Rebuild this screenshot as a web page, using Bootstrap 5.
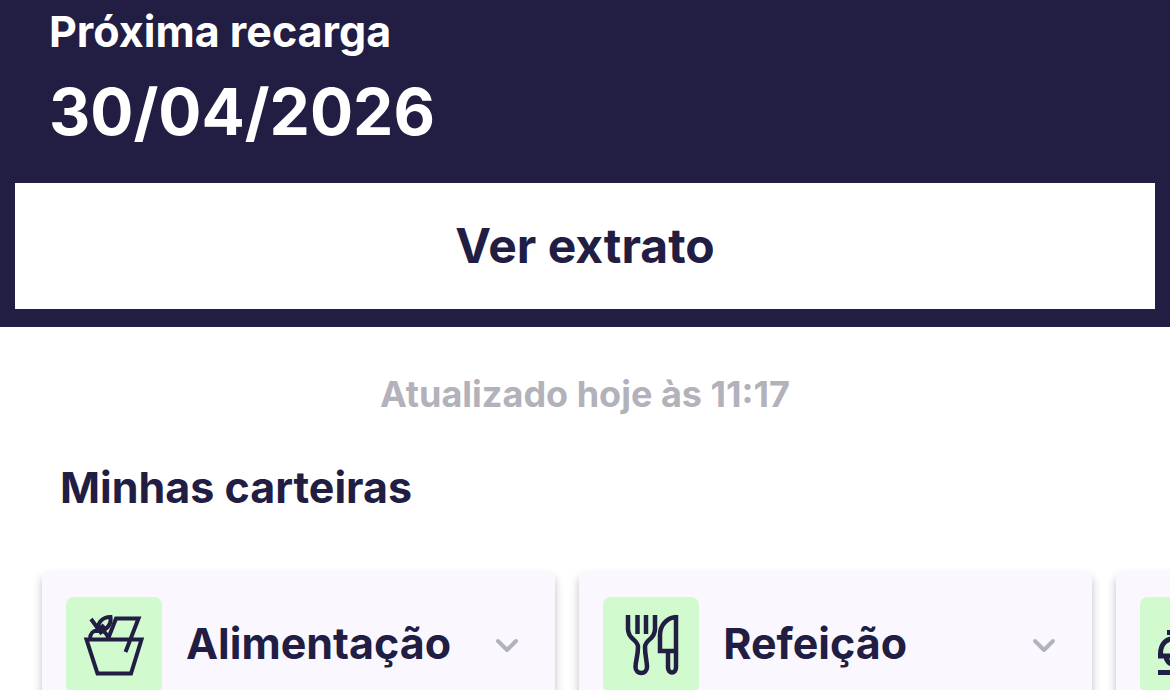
<!DOCTYPE html>
<html lang="pt-BR">
<head>
<meta charset="utf-8">
<meta name="viewport" content="width=device-width, initial-scale=1">
<title>Carteiras</title>
<link rel="stylesheet" href="https://cdn.jsdelivr.net/npm/bootstrap@5.3.0/dist/css/bootstrap.min.css">
<style>
:root { --ink: #211d43; --muted: #b3b1ba; --mint: #d1facf; --lilac: #faf8fe; }
body { font-family: Inter, "Liberation Sans", sans-serif; font-weight: 700; color: var(--ink); }
.balance { background: var(--ink); padding: 5px 15px 18px; }
.balance-info { padding: 0 34px; }
.label-text { font-size: 43px; line-height: 52px; }
.date-text { font-size: 64px; line-height: 80px; margin-top: 15px; }
.btn-statement { font-size: 48px; line-height: 66px; padding: 30px; margin-top: 31px; border: 0; border-radius: 0; background: #fff; color: var(--ink); font-weight: 700; }
.btn-statement:hover { background: #f1eff8; color: var(--ink); }
.updated { font-size: 36px; line-height: 44px; color: var(--muted); margin-top: 45px; font-weight: 700; }
.section-title { font-size: 43px; line-height: 52px; margin: 45px 0 0; padding: 0 60px; font-weight: 700; }
.wallets { gap: 24px; padding: 58px 0 32px 42px; }
.wallet { flex: 0 0 45.5%; gap: 24px; padding: 26px 32px 26px 24px; border: 0; border-radius: 6px; background: var(--lilac); color: var(--ink); box-shadow: 0 6px 10px rgba(0,0,0,.25); font-size: 43px; line-height: 52px; font-weight: 700; }
.wallet-name { padding-bottom: 4px; }
.wallet-icon { width: 96px; height: 96px; border-radius: 8px; background: var(--mint); }
.chevron { width: 32px; height: 32px; }
</style>
</head>
<body class="vh-100 overflow-hidden bg-white">
<header class="balance text-white">
  <div class="balance-info">
    <div class="label-text">Próxima recarga</div>
    <div class="date-text">30/04/2026</div>
  </div>
  <button type="button" class="btn btn-statement w-100">Ver extrato</button>
</header>
<main>
  <p class="updated text-center mb-0">Atualizado hoje às 11:17</p>
  <h2 class="section-title">Minhas carteiras</h2>
  <div class="wallets d-flex overflow-hidden">
    <button type="button" class="wallet d-flex align-items-center text-start">
      <svg class="wallet-icon flex-shrink-0" viewBox="0 0 96 96" fill="none" stroke="#211d43" stroke-width="4" aria-hidden="true">
        <path d="M20.500 42.500H75.500L65 76.500H31.500ZM42 42L50 21.500H72.500L59.500 55M24 42C24 31 38 30 42 40M25 22L36 37"/>
        <path d="M32 34C31 26 36 20 44.500 20C45.500 27 41 34 32 34L38 28" stroke-width="4"/>
      </svg>
      <span class="wallet-name flex-grow-1">Alimentação</span>
      <svg class="chevron flex-shrink-0" viewBox="0 0 32 32" fill="none" stroke="#b3b1ba" stroke-width="4" stroke-linecap="round" stroke-linejoin="round" aria-hidden="true"><path d="M7 12L16 21L25 12"/></svg>
    </button>
    <button type="button" class="wallet d-flex align-items-center text-start">
      <svg class="wallet-icon flex-shrink-0" viewBox="0 0 96 96" fill="none" stroke="#211d43" stroke-width="4.500" aria-hidden="true">
        <path d="M25 18V32C25 43 35 42 35 50C35 59 32.500 64 32.500 70C32.500 78 44 78 44 70C44 64 42 59 42 50C42 42 52 43 52 32V18M34.500 18V37M43 18V37M73 18V70.500C73 77 65 77 65 70.500V54M73 20C63 21 57 29 57 38V54H73"/>
      </svg>
      <span class="wallet-name flex-grow-1">Refeição</span>
      <svg class="chevron flex-shrink-0" viewBox="0 0 32 32" fill="none" stroke="#b3b1ba" stroke-width="4" stroke-linecap="round" stroke-linejoin="round" aria-hidden="true"><path d="M7 12L16 21L25 12"/></svg>
    </button>
    <button type="button" class="wallet d-flex align-items-center text-start" aria-label="Carteira">
      <svg class="wallet-icon flex-shrink-0" viewBox="0 0 96 96" fill="none" stroke="#211d43" stroke-width="5" aria-hidden="true">
        <path d="M27 35.500H69M18 75.500H78M20.500 59V57C20.500 47 26 41.500 35 41.500H61C70 41.500 76 47 76 57V59ZM26 59A7 8 0 0 0 40 59M56 59A7 8 0 0 0 70 59"/>
      </svg>
    </button>
  </div>
</main>
<script src="https://cdn.jsdelivr.net/npm/bootstrap@5.3.0/dist/js/bootstrap.bundle.min.js"></script>
</body>
</html>
